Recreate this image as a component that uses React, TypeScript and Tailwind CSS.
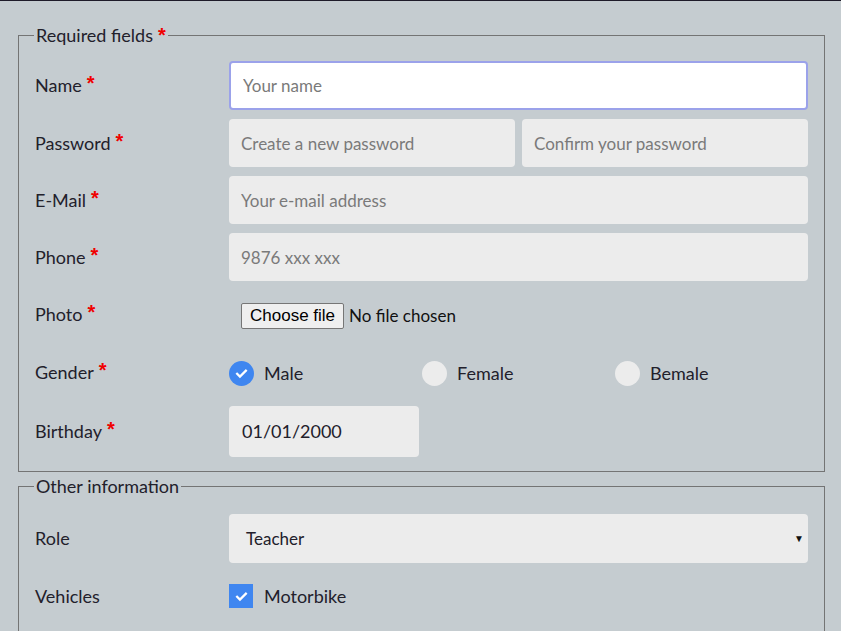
const Star = () => (
  <span
    className="text-[#f00000] text-[20px] font-bold leading-none align-top ml-[5px] relative top-[1px]"
    style={{ fontFamily: "'Liberation Sans', Arial, sans-serif" }}
  >
    *
  </span>
);

const Row = ({ label, req = true, h = "h-[48px]", children }: { label: string; req?: boolean; h?: string; children: React.ReactNode }) => (
  <div className={`flex items-center ${h} mb-[9px] last:mb-0`}>
    <div className="w-[194px] shrink-0 text-[18px] text-[#22202b]">
      {label}
      {req && <Star />}
    </div>
    <div className="flex-1 h-full flex items-center">{children}</div>
  </div>
);

const Field = ({ placeholder, focus = false }: { placeholder: string; focus?: boolean }) => (
  <input
    placeholder={placeholder}
    className={`w-full h-full rounded-[4px] px-[12px] text-[17px] outline-none placeholder:text-[#7a7a7a] ${
      focus ? "bg-white border-2 border-[#9ba2ea] px-[11px]" : "bg-[#ececec]"
    }`}
    style={{ fontFamily: "Lato, sans-serif" }}
  />
);

const Check = () => (
  <svg viewBox="0 0 24 24" className="w-[15px] h-[15px]" fill="none" stroke="white" strokeWidth="3.6" strokeLinecap="square">
    <path d="M5 12.5l4.5 4.5L19 7.5" />
  </svg>
);

const Radio = ({ label, on = false }: { label: string; on?: boolean }) => (
  <div className="flex-1 flex items-center">
    <div className={`w-[25px] h-[25px] rounded-full flex items-center justify-center ${on ? "bg-[#3f86f0]" : "bg-[#ececec]"}`}>
      {on && <Check />}
    </div>
    <span className="ml-[10px] text-[18px] text-[#22202b]">{label}</span>
  </div>
);

export default function App() {
  return (
    <div className="min-h-[631px] bg-[#c5ccd0] border-t border-[#1e1b29] pt-[23px] pb-[10px]" style={{ fontFamily: "Lato, sans-serif" }}>
      <fieldset className="ml-[18px] mr-[16px] border border-[#747474] pl-[16px] pr-[16px] pt-[15px] pb-[14px]">
        <legend className="ml-[-1px] px-[2px] text-[18px] text-[#22202b] leading-[22px]">
          Required fields
          <Star />
        </legend>
        <Row label="Name" h="h-[49px]">
          <Field placeholder="Your name" focus />
        </Row>
        <Row label="Password">
          <div className="flex gap-[7px] w-full h-full">
            <Field placeholder="Create a new password" />
            <Field placeholder="Confirm your password" />
          </div>
        </Row>
        <Row label="E-Mail">
          <Field placeholder="Your e-mail address" />
        </Row>
        <Row label="Phone">
          <Field placeholder="9876 xxx xxx" />
        </Row>
        <Row label="Photo">
          <div className="flex items-center pl-[12px] mt-[3px]">
            <button
              className="h-[26px] px-[8px] bg-[#efefef] border border-[#767676] rounded-[2px] text-[17px] text-black leading-none"
              style={{ fontFamily: "'Liberation Sans', Arial, sans-serif" }}
            >
              Choose file
            </button>
            <span className="ml-[5px] text-[17px] text-[#111]">No file chosen</span>
          </div>
        </Row>
        <Row label="Gender" h="h-[50px]">
          <div className="flex w-full mt-[2px]">
            <Radio label="Male" on />
            <Radio label="Female" />
            <Radio label="Bemale" />
          </div>
        </Row>
        <Row label="Birthday" h="h-[51px]">
          <div className="w-[190px] h-full rounded-[4px] bg-[#ececec] flex items-center pl-[13px] text-[18px] text-[#22202b]">
            01/01/2000
          </div>
        </Row>
      </fieldset>

      <fieldset className="mt-[3px] ml-[18px] mr-[16px] border border-[#747474] pl-[16px] pr-[16px] pt-[17px] pb-[14px]">
        <legend className="ml-[-1px] px-[2px] text-[18px] text-[#22202b] leading-[22px]">Other information</legend>
        <Row label="Role" req={false} h="h-[49px]">
          <div className="w-full h-full rounded-[4px] bg-[#ececec] flex items-center justify-between pl-[17px] pr-[4px] text-[17px] text-[#22202b]">
            <span>Teacher</span>
            <span className="text-[10px] text-[#111]">▼</span>
          </div>
        </Row>
        <Row label="Vehicles" req={false}>
          <div className="flex items-center">
            <div className="w-[24px] h-[24px] bg-[#3f86f0] flex items-center justify-center">
              <Check />
            </div>
            <span className="ml-[11px] text-[18px] text-[#22202b]">Motorbike</span>
          </div>
        </Row>
      </fieldset>
    </div>
  );
}
